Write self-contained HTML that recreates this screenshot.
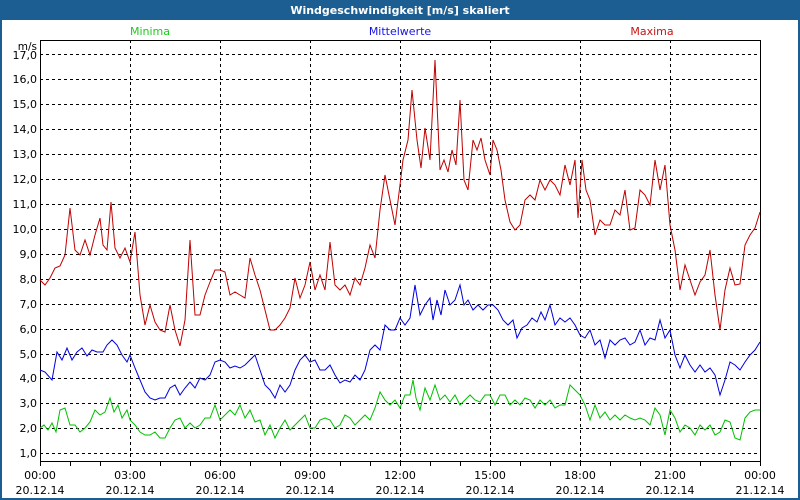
<!DOCTYPE html>
<html><head><meta charset="utf-8"><style>
html,body{margin:0;padding:0;width:800px;height:500px;overflow:hidden;background:#fff}
svg text{font-family:"DejaVu Sans","Liberation Sans",sans-serif;font-size:11px}
</style></head><body>
<svg width="800" height="500" xmlns="http://www.w3.org/2000/svg">
<rect x="0" y="0" width="800" height="500" fill="#1d5e92"/>
<rect x="2" y="20" width="796" height="478" fill="#fff"/>
<text x="400" y="14" text-anchor="middle" fill="#fff" font-weight="bold" style="font-size:11px">Windgeschwindigkeit [m/s] skaliert</text>
<text x="150" y="35" text-anchor="middle" fill="#1ec81e">Minima</text>
<text x="400" y="35" text-anchor="middle" fill="#1414e6">Mittelwerte</text>
<text x="652" y="35" text-anchor="middle" fill="#c81414">Maxima</text>
<text x="37" y="50" text-anchor="end" fill="#000" style="font-size:10.5px">m/s</text>
<g stroke="#000" stroke-width="1" stroke-dasharray="3,3" fill="none">
<path d="M40 54.5H760M40 79.5H760M40 104.5H760M40 129.5H760M40 154.5H760M40 179.5H760M40 204.5H760M40 229.5H760M40 254.5H760M40 279.5H760M40 304.5H760M40 329.5H760M40 354.5H760M40 378.5H760M40 403.5H760M40 428.5H760M40 453.5H760"/>
<path d="M130.5 40V461M220.5 40V461M310.5 40V461M400.5 40V461M490.5 40V461M580.5 40V461M670.5 40V461"/>
</g>
<rect x="40.5" y="40.5" width="720" height="421" fill="none" stroke="#000"/>
<g stroke="#000"><path d="M70.5 461v5M100.5 461v5M130.5 461v5M160.5 461v5M190.5 461v5M220.5 461v5M250.5 461v5M280.5 461v5M310.5 461v5M340.5 461v5M370.5 461v5M400.5 461v5M430.5 461v5M460.5 461v5M490.5 461v5M520.5 461v5M550.5 461v5M580.5 461v5M610.5 461v5M640.5 461v5M670.5 461v5M700.5 461v5M730.5 461v5M40.5 461v5M760.5 461v5"/></g>
<g fill="#000" text-anchor="end">
<text x="37" y="59">17,0</text><text x="37" y="83">16,0</text><text x="37" y="108">15,0</text><text x="37" y="133">14,0</text><text x="37" y="158">13,0</text><text x="37" y="183">12,0</text><text x="37" y="208">11,0</text><text x="37" y="233">10,0</text><text x="37" y="258">9,0</text><text x="37" y="283">8,0</text><text x="37" y="308">7,0</text><text x="37" y="333">6,0</text><text x="37" y="358">5,0</text><text x="37" y="382">4,0</text><text x="37" y="407">3,0</text><text x="37" y="432">2,0</text><text x="37" y="457">1,0</text>
</g>
<g fill="#000" text-anchor="middle">
<text x="40" y="479">00:00</text><text x="40" y="494">20.12.14</text>
<text x="130" y="479">03:00</text><text x="130" y="494">20.12.14</text>
<text x="220" y="479">06:00</text><text x="220" y="494">20.12.14</text>
<text x="310" y="479">09:00</text><text x="310" y="494">20.12.14</text>
<text x="400" y="479">12:00</text><text x="400" y="494">20.12.14</text>
<text x="490" y="479">15:00</text><text x="490" y="494">20.12.14</text>
<text x="580" y="479">18:00</text><text x="580" y="494">20.12.14</text>
<text x="670" y="479">21:00</text><text x="670" y="494">20.12.14</text>
<text x="760" y="479">00:00</text><text x="760" y="494">21.12.14</text>
</g>
<polyline fill="none" stroke="#00c000" stroke-width="1" points="40,428 44,425 48,430 52,423 56,432 60,410 65,408 70,425 75,425 80,432 85,428 90,422 95,410 100,415 105,412 110,398 114,412 118,405 122,418 127,410 130,420 135,425 140,432 145,435 150,435 155,432 160,438 165,438 170,428 175,420 180,418 185,428 190,423 195,428 200,425 205,418 210,418 215,405 220,420 225,415 230,410 235,415 240,405 245,418 250,410 255,422 260,420 265,435 270,425 275,438 280,428 285,420 290,430 295,425 300,420 305,415 310,428 315,428 320,420 325,418 330,420 335,428 340,425 345,415 350,418 355,425 360,420 365,415 370,420 375,408 380,392 385,400 390,405 395,400 400,408 405,395 410,395 413,380 416,398 420,410 425,388 430,400 435,385 440,400 445,395 450,402 455,395 460,405 465,400 470,395 475,400 480,402 485,395 490,395 495,405 500,395 505,395 510,405 515,400 520,405 525,398 530,400 535,408 540,400 545,405 550,400 555,408 560,405 565,405 570,385 575,390 580,395 585,405 590,420 595,405 600,418 605,412 610,420 615,415 620,420 625,415 630,418 635,420 640,418 645,420 650,425 655,408 660,415 665,435 670,410 675,418 680,432 685,425 690,428 695,435 700,425 705,430 710,425 715,435 720,432 725,420 730,422 735,438 740,440 745,418 750,412 755,410 760,410"/>
<polyline fill="none" stroke="#0000e0" stroke-width="1" points="40,370 45,372 52,380 57,352 62,360 67,348 72,360 77,352 82,348 87,356 92,350 97,352 103,352 107,345 112,340 117,345 122,355 127,362 130,355 135,368 140,380 145,392 150,398 155,400 160,398 165,398 170,388 175,385 180,395 185,388 190,382 195,388 200,378 205,380 210,375 215,362 220,360 225,362 230,368 235,366 240,368 245,365 250,360 255,355 260,370 265,385 270,390 275,398 280,385 285,392 290,385 295,370 300,360 305,355 310,362 315,360 320,370 325,370 330,365 335,375 340,383 345,380 350,382 355,375 360,380 365,370 370,350 375,345 380,350 385,325 390,330 395,330 400,318 405,325 410,318 415,285 420,315 425,305 430,298 433,320 437,300 441,315 445,290 450,305 455,300 460,285 464,305 468,300 473,310 478,305 483,310 488,305 493,305 498,310 503,320 508,325 513,320 517,338 522,328 527,325 532,318 537,322 541,312 545,320 550,305 555,325 560,318 565,322 570,318 575,325 580,335 585,338 590,330 595,345 600,340 605,358 610,340 615,345 620,340 625,338 630,345 635,342 640,330 645,345 650,338 655,340 660,320 665,338 670,330 675,355 680,368 685,355 690,365 695,372 700,365 705,372 710,368 715,375 720,395 725,380 730,362 735,365 740,370 745,362 750,355 755,350 760,342"/>
<polyline fill="none" stroke="#c00000" stroke-width="1" points="40,280 45,285 50,278 55,268 60,266 65,255 70,208 75,250 80,255 85,240 90,255 95,235 100,218 103,245 107,250 111,202 115,248 120,258 125,248 130,262 135,232 140,295 145,325 150,305 155,322 160,330 165,332 170,305 175,330 180,346 185,320 190,240 195,315 200,315 205,295 210,282 215,270 220,270 225,272 230,295 235,292 240,295 245,298 250,258 255,275 260,290 265,310 270,330 275,330 280,325 285,318 290,308 295,278 300,298 305,285 310,262 315,290 320,275 325,290 330,242 335,285 340,290 345,285 350,295 355,278 360,285 365,268 370,245 375,258 380,210 385,175 390,200 395,225 400,185 403,160 408,140 412,90 417,140 421,168 425,128 430,160 435,60 440,170 444,160 448,172 452,150 456,165 460,100 464,180 468,190 473,140 477,150 481,138 485,160 490,175 493,140 497,150 501,170 505,200 510,222 515,230 520,225 525,200 530,195 535,200 540,180 545,190 550,180 555,185 560,195 565,165 570,185 575,160 578,218 582,160 586,190 590,200 595,235 600,220 605,225 610,225 615,210 620,215 625,190 630,230 635,228 640,190 645,195 650,205 655,160 660,190 665,165 670,225 675,250 680,290 685,265 690,280 695,295 700,282 705,275 710,250 715,295 720,330 725,290 730,268 735,285 740,284 745,245 750,235 755,228 760,212"/>
</svg>
</body></html>
